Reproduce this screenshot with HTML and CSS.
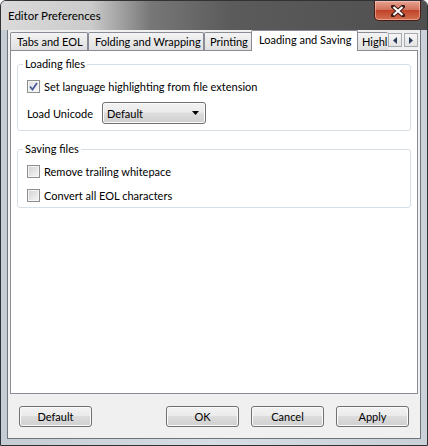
FILE: index.html
```html
<!DOCTYPE html>
<html lang="en">
<head>
    <meta charset="UTF-8">
    <title>Editor Preferences</title>
    <link rel="stylesheet" href="styles.css">
</head>
<body>
    <div class="window">
        <div class="titlebar">
            <span class="title">Editor Preferences</span>
            <button class="close" aria-label="Close">
                <svg width="14" height="12" viewBox="0 0 14 12">
                    <path d="M2 1.5 L12 10.5 M12 1.5 L2 10.5" stroke="#3a1a14" stroke-width="4" stroke-linecap="square"/>
                    <path d="M2.5 2 L11.5 10 M11.5 2 L2.5 10" stroke="#fff" stroke-width="2.2"/>
                </svg>
            </button>
        </div>
        <div class="client">
            <div class="tabs">
                <div class="tab tab-tabs">Tabs and EOL</div>
                <div class="tab tab-folding">Folding and Wrapping</div>
                <div class="tab tab-printing">Printing</div>
                <div class="tab tab-loading active">Loading and Saving</div>
                <div class="tab tab-highlight">Highl</div>
                <div class="tab-scroll">
                    <span class="scroll-btn">
                        <svg width="4" height="7" viewBox="0 0 4 7"><path d="M4 0 L0 3.5 L4 7 Z" fill="#2a3a5a"/></svg>
                    </span>
                    <span class="scroll-btn">
                        <svg width="4" height="7" viewBox="0 0 4 7"><path d="M0 0 L4 3.5 L0 7 Z" fill="#2a3a5a"/></svg>
                    </span>
                </div>
            </div>
            <div class="panel">
                <fieldset class="group group-loading">
                    <legend>Loading files</legend>
                    <label class="check">
                        <span class="box checked">
                            <svg width="9" height="9" viewBox="0 0 9 9"><path d="M1 4.5 L3.5 7.5 L8 1" fill="none" stroke="#4a5a9a" stroke-width="1.8"/></svg>
                        </span>
                        Set language highlighting from file extension
                    </label>
                    <div class="field-row">
                        <span class="field-label">Load Unicode</span>
                        <div class="combo">
                            <span>Default</span>
                            <svg width="7" height="4" viewBox="0 0 7 4"><path d="M0 0 L7 0 L3.5 4 Z" fill="#000"/></svg>
                        </div>
                    </div>
                </fieldset>
                <fieldset class="group group-saving">
                    <legend>Saving files</legend>
                    <label class="check"><span class="box"></span>Remove trailing whitepace</label>
                    <label class="check"><span class="box"></span>Convert all EOL characters</label>
                </fieldset>
            </div>
            <div class="buttons">
                <button class="btn btn-default">Default</button>
                <button class="btn">OK</button>
                <button class="btn">Cancel</button>
                <button class="btn">Apply</button>
            </div>
        </div>
    </div>
</body>
</html>
```

FILE: styles.css
```css
* {
    box-sizing: border-box;
}

body {
    margin: 0;
    font-family: Lato, "Open Sans", sans-serif;
    font-size: 11px;
    color: #000;
    background: #fff;
}

.window {
    width: 428px;
    height: 446px;
    display: flex;
    flex-direction: column;
    border: 1px solid #2f3338;
    border-radius: 6px 6px 0 0;
    padding: 0 6px 6px;
    background: linear-gradient(90deg, #c6ccd3, #d7dde4 50%, #c9d0d8);
    overflow: hidden;
}

.titlebar {
    height: 29px;
    margin: 0 -6px;
    display: flex;
    align-items: flex-start;
    background: linear-gradient(90deg, #dadada 0, #cbcbcb 90px, #777 150px, #5b5b5b 230px, #4f4f4f 100%);
}

.title {
    padding: 7px 0 0 7px;
    font-size: 11.5px;
    line-height: 16px;
}

.close {
    margin: 0 6px 0 auto;
    width: 47px;
    height: 20px;
    border: 1px solid #4a1a14;
    border-top: none;
    border-radius: 0 0 5px 5px;
    background: linear-gradient(#e8a493, #d1735c 45%, #c0432a 50%, #d2704f);
    box-shadow: inset 0 0 0 1px rgba(255, 210, 200, 0.5);
    display: flex;
    align-items: center;
    justify-content: center;
    padding: 0;
}

.client {
    flex: 1;
    display: flex;
    flex-direction: column;
    background: #f0f0f0;
    border: 1px solid #6f747a;
    border-top: none;
    padding: 0 2px;
}

/* tab strip */
.tabs {
    height: 20px;
    display: flex;
    align-items: flex-end;
}

.tab {
    height: 18px;
    border: 1px solid #898c95;
    border-bottom: none;
    border-radius: 2px 2px 0 0;
    background: linear-gradient(#f4f4f4, #e9e9e9 50%, #e0e0e0);
    line-height: 17px;
    padding: 0 6px;
    white-space: nowrap;
    overflow: hidden;
    flex: none;
}

.tab-tabs { width: 78px; }
.tab-folding { width: 116px; }
.tab-printing { width: 48px; padding: 0 5px; }

.tab.active {
    position: relative;
    z-index: 1;
    width: 107px;
    height: 21px;
    margin: 0 -2px -1px -1px;
    background: #fff;
    line-height: 18px;
    padding: 0 7px;
}

.tab-highlight {
    width: 32px;
    padding: 0 4px 0 5px;
    border-right: none;
}

.tab-scroll {
    display: flex;
    gap: 2px;
    align-self: flex-start;
    margin-top: 3px;
}

.scroll-btn {
    width: 14px;
    height: 14px;
    border: 1px solid #a7abb0;
    background: linear-gradient(#f6f6f6, #e3e3e3);
    display: flex;
    align-items: center;
    justify-content: center;
}

/* tab page */
.panel {
    height: 344px;
    background: #fff;
    border: 1px solid #898c95;
    padding: 0 6px;
}

.group {
    margin: 6px 0 0;
    border: 1px solid #d5dfe5;
    border-radius: 3px;
    padding: 0 9px 3px;
}

.group legend {
    margin-left: -4px;
    padding: 0 2px;
    line-height: 14px;
}

.group-saving {
    margin-top: 11px;
}

.check {
    height: 18px;
    margin-top: 6px;
    display: flex;
    align-items: center;
    gap: 4px;
}

.box {
    width: 13px;
    height: 13px;
    border: 1px solid #8e8f8f;
    background: linear-gradient(135deg, #d0d0d0, #f7f7f7);
    box-shadow: inset 0 0 0 1px #f4f4f4;
    display: flex;
    align-items: center;
    justify-content: center;
}

.box.checked {
    background: linear-gradient(135deg, #e0e0e0, #f8f8f8);
}

.field-row {
    display: flex;
    align-items: center;
    margin: 7px 0 3px;
}

.field-label {
    width: 75px;
}

.combo,
.btn {
    border: 1px solid #707070;
    border-radius: 3px;
    background: linear-gradient(#f2f2f2, #ebebeb 45%, #dddddd 50%, #cfcfcf);
    box-shadow: inset 0 0 0 1px #fbfbfb;
}

.combo {
    width: 104px;
    height: 22px;
    display: flex;
    align-items: center;
    justify-content: space-between;
    padding: 0 6px 0 4px;
}

/* dialog buttons */
.buttons {
    display: flex;
    gap: 12px;
    margin-top: 12px;
    padding: 0 9px;
}

.btn {
    width: 73px;
    height: 21px;
    padding: 0;
    font: inherit;
    color: #000;
}

.btn-default {
    margin-right: auto;
}
```
